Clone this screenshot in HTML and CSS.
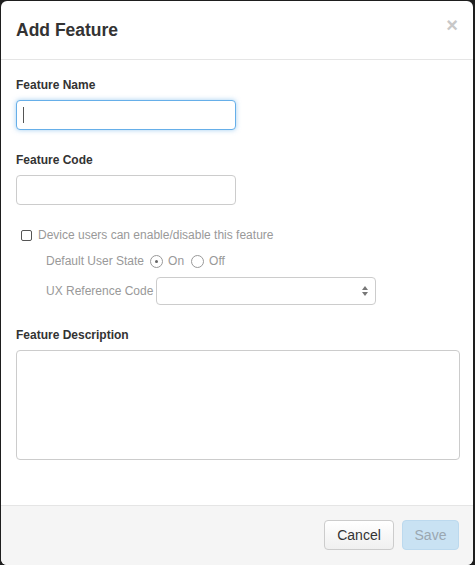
FILE: index.html
```html
<!DOCTYPE html>
<html>
<head>
<meta charset="utf-8">
<link rel="stylesheet" href="styles.css">
</head>
<body>
<div class="modal">
  <div class="modal-header">
    <h4 class="modal-title">Add Feature</h4>
    <span class="close">×</span>
  </div>
  <div class="modal-body">
    <div class="form-group">
      <label class="lbl">Feature Name</label>
      <div class="field-wrap">
        <input class="form-control focused" type="text">
        <span class="caret"></span>
      </div>
    </div>
    <div class="form-group">
      <label class="lbl">Feature Code</label>
      <input class="form-control" type="text">
    </div>
    <div class="check-row">
      <span class="checkbox"></span>
      <span class="muted">Device users can enable/disable this feature</span>
    </div>
    <div class="sub-row">
      <span class="muted">Default User State</span>
      <span class="radio on"></span><span class="muted">On</span>
      <span class="radio off"></span><span class="muted">Off</span>
    </div>
    <div class="sub-row ux-row">
      <span class="muted">UX Reference Code</span>
      <div class="select">
        <svg class="arrows" width="8" height="12" viewBox="0 0 8 12"><path d="M4 1 L7 5 L1 5 Z M4 11 L7 7 L1 7 Z" fill="#777"/></svg>
      </div>
    </div>
    <div class="form-group desc">
      <label class="lbl">Feature Description</label>
      <textarea class="form-control textarea"></textarea>
    </div>
  </div>
  <div class="modal-footer">
    <button class="btn btn-default">Cancel</button>
    <button class="btn btn-primary">Save</button>
  </div>
</div>
</body>
</html>
```
FILE: styles.css
```css
* { box-sizing: border-box; }
html, body { margin: 0; padding: 0; }
body {
  background: #1e1e1e;
  width: 475px;
  height: 565px;
  overflow: hidden;
  font-family: "Liberation Sans", Arial, sans-serif;
  font-size: 12px;
  color: #333;
}
.modal {
  margin: 1px 2px 0 1px;
  height: 564px;
  background: #fff;
  border-radius: 6px;
  display: flex;
  flex-direction: column;
  overflow: hidden;
}
.modal-header {
  height: 59px;
  border-bottom: 1px solid #e5e5e5;
  padding: 0 15px;
  display: flex;
  align-items: flex-start;
  justify-content: space-between;
}
.modal-title {
  margin: 0;
  padding-top: 18px;
  font-size: 17.5px;
  line-height: 22px;
  font-weight: bold;
  color: #333;
}
.close {
  margin-top: 12px;
  font-size: 20px;
  line-height: 24px;
  font-weight: bold;
  color: #c8c8c8;
}
.modal-body {
  flex: 1;
  padding: 15px 15px 0 15px;
}
.form-group { margin-bottom: 20px; }
.lbl {
  display: block;
  font-weight: bold;
  line-height: 20px;
  margin-bottom: 5px;
}
.field-wrap { position: relative; }
.form-control {
  display: block;
  width: 220px;
  height: 30px;
  border: 1px solid #ccc;
  border-radius: 4px;
  background: #fff;
  font-family: inherit;
  font-size: 12px;
  padding: 4px 8px;
  outline: none;
}
.form-control.focused {
  border-color: #66afe9;
  box-shadow: 0 0 5px rgba(102, 175, 233, 0.6);
}
.caret {
  position: absolute;
  left: 7px;
  top: 7px;
  width: 1px;
  height: 16px;
  background: #555;
}
.check-row {
  display: flex;
  align-items: center;
  margin-top: 20px;
  padding-left: 5px;
  height: 20px;
  gap: 6px;
}
.muted { color: #999; }
.checkbox {
  width: 11px;
  height: 11px;
  border: 1px solid #555;
  border-radius: 2px;
  background: #fff;
}
.sub-row {
  display: flex;
  align-items: center;
  padding-left: 30px;
  height: 20px;
  margin-top: 6px;
}
.radio {
  width: 13px;
  height: 13px;
  border: 1px solid #999;
  border-radius: 50%;
  margin: 0 5px 0 6px;
  position: relative;
  background: #fff;
}
.radio.off { margin-left: 7px; }
.radio.on::after {
  content: "";
  position: absolute;
  left: 4px;
  top: 4px;
  width: 3px;
  height: 3px;
  border-radius: 50%;
  background: #666;
}
.ux-row {
  height: 28px;
  margin-top: 6px;
}
.select {
  margin-left: 3px;
  width: 220px;
  height: 28px;
  border: 1px solid #ccc;
  border-radius: 4px;
  background: #fff;
  display: flex;
  align-items: center;
  justify-content: flex-end;
  padding-right: 6px;
}
.desc { margin-top: 20px; }
.textarea {
  width: 444px;
  height: 110px;
  resize: none;
  margin-top: 5px;
}
.desc .lbl { margin-bottom: 0; }
.modal-footer {
  height: 60px;
  border-top: 1px solid #e5e5e5;
  background: #f5f5f5;
  display: flex;
  justify-content: flex-end;
  align-items: flex-start;
  padding: 14px 14px 0 0;
  gap: 8px;
}
.btn {
  height: 30px;
  border-radius: 4px;
  font-family: inherit;
  font-size: 14px;
  padding: 0 11px;
}
.btn-default {
  width: 70px;
  border: 1px solid #ccc;
  background: linear-gradient(#fff, #f0f0f0);
  color: #333;
}
.btn-primary {
  width: 57px;
  border: 1px solid #bcd9ee;
  background: #c9e2f3;
  color: #9aa7b1;
}
```
